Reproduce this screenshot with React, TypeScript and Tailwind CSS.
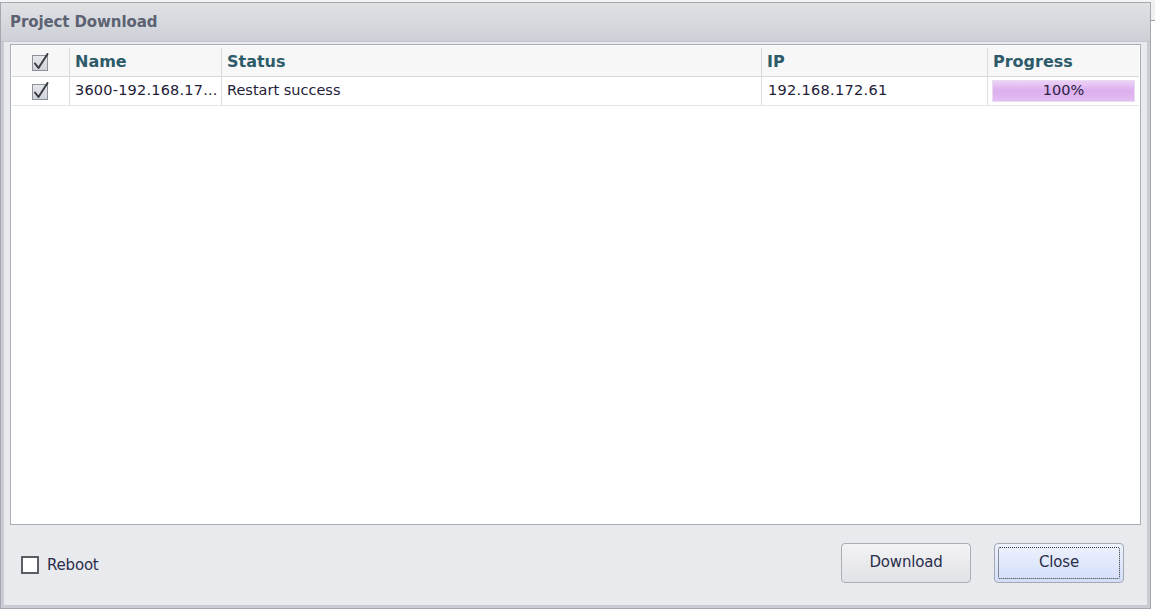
import React from "react";

function CheckIcon() {
  return (
    <svg width="19" height="19" viewBox="0 0 19 19">
      <defs>
        <linearGradient id="cbg" x1="0" y1="0" x2="0" y2="1">
          <stop offset="0" stopColor="#e6e8ec" />
          <stop offset="1" stopColor="#cfd2d8" />
        </linearGradient>
      </defs>
      <rect x="1.5" y="2.5" width="15" height="15" fill="url(#cbg)" stroke="#8c919a" strokeWidth="1" />
      <path d="M4 10.5 L7.5 15 L16.5 1" fill="none" stroke="#3a3d44" strokeWidth="2" strokeLinejoin="round" strokeLinecap="round" />
    </svg>
  );
}

const tahoma = { fontFamily: '"DejaVu Sans", Verdana, sans-serif' };

export default function App() {
  return (
    <div className="w-[1155px] h-[611px] bg-white flex flex-col overflow-hidden" style={tahoma}>
      <div className="h-[2px] bg-[#f4f4f4] shrink-0" />
      <div className="flex flex-1 min-h-0">
        <div className="w-[1151px] h-[607px] border border-[#a3a7b0] bg-[#e9eaee] flex flex-col">
          {/* title bar */}
          <div className="h-[39px] shrink-0 bg-gradient-to-b from-[#dfe1e5] to-[#cdd0d6] flex items-center pl-[9px] pt-[1px] border-b border-[#c4c7cd]">
            <span className="text-[15px] font-bold text-[#5c6272] tracking-[-0.1px]">Project Download</span>
          </div>
          <div className="flex-1 flex flex-col border-l-[3px] border-r-[3px] border-b-[3px] border-[#c9ccd2] pt-[2px] px-[6px]">
            {/* grid */}
            <div className="h-[481px] border border-[#a9adb5] bg-white p-[1px] flex flex-col">
              <div className="h-[31px] flex bg-[#f7f7f8] border-b border-[#d6d8dc] text-[16px] font-bold text-[#2d5b69] pt-[2px]">
                <div className="w-[58px] flex items-center justify-center border-r border-[#d8dade]"><CheckIcon /></div>
                <div className="w-[152px] flex items-center pl-[5px] border-r border-[#d8dade]">Name</div>
                <div className="w-[540px] flex items-center pl-[5px] border-r border-[#d8dade]">Status</div>
                <div className="w-[226px] flex items-center pl-[5px] border-r border-[#d8dade]">IP</div>
                <div className="flex-1 flex items-center pl-[5px]">Progress</div>
              </div>
              <div className="h-[29px] flex border-b border-[#e2e4e7] text-[14.5px] text-[#1e2038]">
                <div className="w-[58px] flex items-center justify-center border-r border-[#dcdee2]"><CheckIcon /></div>
                <div className="w-[152px] flex items-center pl-[5px] border-r border-[#dcdee2] tracking-[0.2px] whitespace-nowrap overflow-hidden">3600-192.168.17...</div>
                <div className="w-[540px] flex items-center pl-[5px] border-r border-[#dcdee2]">Restart success</div>
                <div className="w-[226px] flex items-center pl-[6px] border-r border-[#dcdee2] tracking-[0.3px]">192.168.172.61</div>
                <div className="flex-1 flex items-center px-[4px]">
                  <div className="h-[22px] w-full bg-gradient-to-b from-[#ecd0f7] via-[#dcaeee] to-[#e3bdf3] border border-[#eadcf0] flex items-center justify-center text-[14.5px] text-[#2a2240]">
                    100%
                  </div>
                </div>
              </div>
            </div>
            {/* bottom */}
            <div className="flex-1 flex items-center justify-between pl-[11px] pr-[17px] pb-[5px]">
              <div className="flex items-center gap-[8px] pt-[5px]">
                <div className="w-[18px] h-[18px] border-2 border-[#5a5d63] bg-white" />
                <span className="text-[15px] text-[#2a2e4a] tracking-[-0.2px]">Reboot</span>
              </div>
              <div className="flex gap-[23px]">
                <button className="w-[130px] h-[40px] rounded-[4px] border border-[#a9adb5] bg-gradient-to-b from-[#f3f3f5] to-[#e1e2e6] text-[15px] text-[#2a2e4a] tracking-[-0.2px]">
                  Download
                </button>
                <button className="w-[130px] h-[40px] rounded-[4px] border border-[#a5a9b1] bg-gradient-to-b from-[#eef2fd] to-[#d3defa] p-[3px]">
                  <div className="w-full h-full border border-dotted border-[#333] rounded-[2px] flex items-center justify-center text-[15px] text-[#2a2e4a] tracking-[-0.2px]">
                    Close
                  </div>
                </button>
              </div>
            </div>
          </div>
        </div>
        <div className="flex-1 flex flex-col">
          <div className="h-[18px] bg-[#f0f0f0]" />
          <div className="h-[1px] bg-[#a0a0a0]" />
          <div className="flex-1 bg-white" />
        </div>
      </div>
    </div>
  );
}
